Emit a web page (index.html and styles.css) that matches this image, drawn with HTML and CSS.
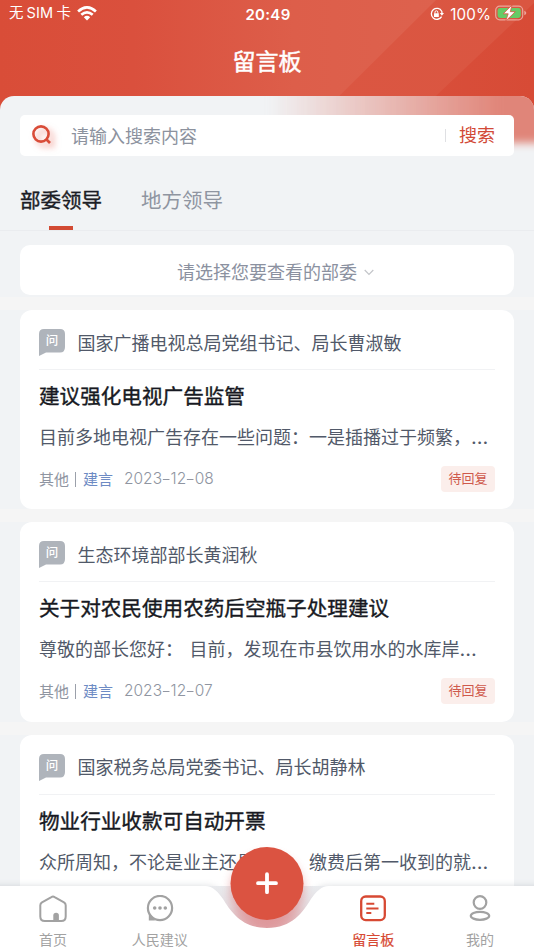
FILE: index.html
```html
<!DOCTYPE html>
<html lang="zh-CN">
<head>
<meta charset="utf-8">
<title>留言板</title>
<link rel="stylesheet" href="styles.css">
</head>
<body>
<div class="phone">
  <header class="top">
    <svg class="top-bg" viewBox="0 0 534 130" preserveAspectRatio="none">
      <defs>
        <linearGradient id="base"><stop offset="0" stop-color="#d94d38"/><stop offset=".25" stop-color="#da503d"/><stop offset=".55" stop-color="#dd5e4a"/><stop offset="1" stop-color="#dd6450"/></linearGradient>
        <linearGradient id="band"><stop offset="0" stop-color="#db5642"/><stop offset="1" stop-color="#da5641"/></linearGradient>
        <linearGradient id="edge"><stop offset="0" stop-color="#d94f3b"/><stop offset="1" stop-color="#d74b36"/></linearGradient>
      </defs>
      <path fill="url(#base)" d="M0 0H534V130H0Z"/>
      <path fill="url(#band)" d="M436 0H534V130H305Z"/>
      <path fill="url(#edge)" d="M534 3V130H400Z"/>
    </svg>
    <div class="status">
      <div class="status-left"><span class="carrier">无<span class="sim">SIM</span>卡</span>
        <svg width="20" height="15" viewBox="0 0 20 15" fill="none" stroke="#fff" stroke-width="2.7"><path d="M1.1 5.4Q10-2.6 18.9 5.4"/><path d="M4.3 8.8Q10 3.8 15.7 8.8"/><path fill="#fff" stroke="none" d="M6.8 11.2Q10 8.4 13.2 11.2L10 14.6Z"/></svg>
      </div>
      <div class="clock">20:49</div>
      <div class="status-right">
        <svg width="14" height="14" viewBox="0 0 14 14" fill="none" stroke="#fff" stroke-width="1.3"><path d="M11.7 4.2A5.5 5.5 0 1 0 11.6 9.6M11.9 4.3V7"/><path fill="#fff" stroke="none" d="M9.8 6H14L11.9 8.8ZM4 6.2H8.8V10H4Z"/><path stroke-width="1" d="M5 6.4V5.2a1.4 1.4 0 0 1 2.8 0v1.2"/></svg>
        <span class="percent">100%</span>
        <svg width="32" height="16" viewBox="0 0 32 16"><rect x=".7" y="1.2" width="27" height="13.6" rx="4" fill="none" stroke="#fff" stroke-opacity=".48" stroke-width="1.2"/><rect x="2.6" y="3.1" width="23.2" height="9.8" rx="2.4" fill="#65cb66"/><path d="M29.3 5.7q2 .7 2 2.3t-2 2.3Z" fill="#fff" opacity=".5"/><path d="M17 0L8.3 8.8H13.2L10.7 16L20.3 6.7H15.3Z" fill="#fff" stroke="#da5642" stroke-width=".8"/></svg>
      </div>
    </div>
    <h1>留言板</h1>
  </header>
  <main class="sheet">
    <div class="glow"></div>
    <div class="search">
      <svg class="magnifier" width="20" height="20" viewBox="0 0 20 20" fill="none" stroke="#d94c38" stroke-width="2.6"><circle cx="9" cy="9" r="7.6"/><path d="M14 14L18 18"/></svg>
      <span class="placeholder">请输入搜索内容</span>
      <span class="search-btn">搜索</span>
    </div>
    <nav class="tabs"><span class="tab active">部委领导</span><span class="tab">地方领导</span></nav>
    <div class="filter"><div class="select"><span>请选择您要查看的部委</span><svg width="10" height="7" viewBox="0 0 10 7" fill="none" stroke="#c3c5c9" stroke-width="1.2"><path d="M.7 1L5 5.3L9.3 1"/></svg></div></div>
    <section class="list">
      <article class="card-row"><div class="card">
        <div class="person"><span class="ask"><svg viewBox="0 0 26 27"><path fill="#afb4bb" d="M5 0H21Q26 0 26 5V18Q26 23.5 21 23.5H7L0 27V5Q0 0 5 0Z"/></svg><b>问</b></span><span>国家广播电视总局党组书记、局长曹淑敏</span></div>
        <h2>建议强化电视广告监管</h2>
        <p class="desc">目前多地电视广告存在一些问题：一是插播过于频繁，<span class="dots">…</span></p>
        <div class="meta"><span>其他</span><i></i><span class="kind">建言</span><span class="date">2023<s>-</s>12<s>-</s>08</span><span class="tag">待回复</span></div>
      </div></article>
      <article class="card-row"><div class="card">
        <div class="person"><span class="ask"><svg viewBox="0 0 26 27"><path fill="#afb4bb" d="M5 0H21Q26 0 26 5V18Q26 23.5 21 23.5H7L0 27V5Q0 0 5 0Z"/></svg><b>问</b></span><span>生态环境部部长黄润秋</span></div>
        <h2>关于对农民使用农药后空瓶子处理建议</h2>
        <p class="desc">尊敬的部长您好： <span class="after-gap">目前，发现在市县饮用水的水库岸</span><span class="dots">…</span></p>
        <div class="meta"><span>其他</span><i></i><span class="kind">建言</span><span class="date">2023<s>-</s>12<s>-</s>07</span><span class="tag">待回复</span></div>
      </div></article>
      <article class="card-row"><div class="card">
        <div class="person"><span class="ask"><svg viewBox="0 0 26 27"><path fill="#afb4bb" d="M5 0H21Q26 0 26 5V18Q26 23.5 21 23.5H7L0 27V5Q0 0 5 0Z"/></svg><b>问</b></span><span>国家税务总局党委书记、局长胡静林</span></div>
        <h2>物业行业收款可自动开票</h2>
        <p class="desc">众所周知，不论是业主还是租户，缴费后第一收到的就<span class="dots">…</span></p>
      </div></article>
    </section>
  </main>
  <footer class="bottom">
    <svg class="bottom-bg" width="534" height="120" viewBox="0 0 534 120">
      <defs>
        <filter id="soft" x="-50%" y="-50%" width="200%" height="200%"><feGaussianBlur stdDeviation="5"/></filter>
        <filter id="lift" x="-5%" y="-30%" width="110%" height="160%"><feGaussianBlur stdDeviation="3.5"/></filter>
        <linearGradient id="pocket" x1="0" y1="0" x2="0" y2="1"><stop offset="0" stop-color="#e9ebee"/><stop offset=".45" stop-color="#e4dfe3"/><stop offset="1" stop-color="#e0aaae"/></linearGradient>
      </defs>
      <path filter="url(#lift)" fill="#707782" opacity=".25" d="M-20 56H205C232 56 228 98 267 98S302 56 329 56H554V140H-20Z"/>
      <path fill="url(#pocket)" d="M200 56H334V100H200Z"/>
      <circle cx="267" cy="61" r="37" fill="#d95a5c" opacity=".4" filter="url(#soft)"/>
      <path fill="#fff" d="M0 56H205C213 56 218 62 223 69C231 82 242 98 267 98S303 82 311 69C316 62 321 56 329 56H534V120H0Z"/>
      <circle cx="267" cy="53.4" r="36.5" fill="#db5341"/>
      <path d="M267 44.2V62.2M258 53.2H276" stroke="#fff" stroke-width="3.8" stroke-linecap="round"/>
    </svg>
    <div class="items">
      <div class="item"><svg viewBox="0 0 28 28" fill="none" stroke="#a2a2a2" stroke-width="2"><path d="M14 1.6Q14.8 1.6 15.6 2.1L25 7.3Q26.7 8.3 26.7 10.3V21.5Q26.7 26 22.2 26H5.8Q1.3 26 1.3 21.5V10.3Q1.3 8.3 3 7.3L12.4 2.1Q13.2 1.6 14 1.6Z"/><path fill="#a2a2a2" stroke="none" d="M14.3 26V20.5a2.8 2.8 0 0 1 5.6 0V26Z"/></svg><span>首页</span></div>
      <div class="item"><svg viewBox="0 0 28 28" fill="none" stroke="#a2a2a2" stroke-width="2.2"><circle cx="14" cy="13" r="12.1"/><path fill="#a2a2a2" stroke="none" d="M2.8 18V25.5H9L5.5 21Z"/><g fill="#a2a2a2" stroke="none"><circle cx="8.7" cy="13" r="1.8"/><circle cx="14" cy="13" r="1.8"/><circle cx="19.3" cy="13" r="1.8"/></g></svg><span>人民建议</span></div>
      <div class="item"></div>
      <div class="item on"><svg viewBox="0 0 28 28" fill="none" stroke="#d74933" stroke-width="2.3"><rect x="2.2" y="1.5" width="23.6" height="23.6" rx="4.5"/><path stroke-width="2" d="M7.3 8.8H15.3M7.3 13.4H19.5M7.3 18H12.3"/></svg><span>留言板</span></div>
      <div class="item"><svg viewBox="0 0 28 28" fill="none" stroke="#a2a2a2" stroke-width="2.2"><circle cx="14" cy="7.5" r="6.3"/><ellipse cx="14" cy="20.8" rx="9.2" ry="4"/></svg><span>我的</span></div>
    </div>
  </footer>
</div>
</body>
</html>
```
FILE: styles.css
```css
* { box-sizing: border-box; }
body { margin: 0; font-family: Inter, "Noto Sans CJK SC", sans-serif; font-weight: 400; }
.phone { position: relative; width: 534px; height: 950px; overflow: hidden; background: #f1f3f5; display: flex; flex-direction: column; }
h1, h2, p { margin: 0; font-weight: 400; white-space: nowrap; }
.top { position: relative; height: 96px; flex: none; color: #fff; }
.top-bg { position: absolute; left: 0; top: 0; width: 534px; height: 130px; }
.status { position: relative; height: 28px; display: grid; grid-template-columns: 1fr auto 1fr; align-items: center; padding: 0 7px 0 9px; }
.status-left, .status-right { display: flex; align-items: center; }
.status-left { gap: 6px; font-size: 14.5px; line-height: 26px; padding-bottom: 2px; }
.sim { margin: 0 3px; letter-spacing: .2px; }
.status-right { justify-content: flex-end; gap: 4px; }
.status-right > svg:first-child { margin-right: 2px; }
.percent { font-size: 15.2px; letter-spacing: .1px; }
.status-right > svg:last-child { position: relative; top: -1px; }
.clock { font-size: 15px; font-weight: 600; letter-spacing: .3px; }
h1 { position: relative; font-size: 23px; line-height: 68px; text-align: center; -webkit-text-stroke: .5px #fff; }
.sheet { position: relative; flex: 1; min-height: 0; background: #f1f3f5; border-radius: 14px 14px 0 0; padding-top: 19px; overflow: hidden; }
.glow { position: absolute; left: 268px; top: -20px; width: 290px; height: 67px; background: linear-gradient(90deg, #e0857900, #e0857970 35%, #e08579 80%, #e08579); filter: blur(4px); }
.search { position: relative; height: 41px; margin: 0 20px; border-radius: 5px; background: #fff; display: flex; align-items: center; padding: 0 19px 0 12px; font-size: 18px; }
.magnifier { filter: drop-shadow(4px 4px 3px #e2524388); margin-top: -1px; }
.placeholder { flex: 1; margin: -2px 0 0 19px; color: #8c929e; }
.search-btn { color: #d24a37; line-height: 22px; padding-left: 14px; background: linear-gradient(#dfe0e3, #dfe0e3) left center / 1px 13px no-repeat; }
.tabs { display: flex; gap: 39px; height: 75px; padding: 14px 20px 0; border-bottom: 1px solid #eaecef; }
.tab { position: relative; height: 60px; line-height: 61px; font-size: 20.5px; color: #8f95a1; }
.tab.active { color: #1b1d25; -webkit-text-stroke: .4px #1b1d25; }
.tab.active::after { content: ""; position: absolute; left: 29px; bottom: 0; width: 24px; height: 4px; background: #d24a33; }
.filter { padding: 14px 20px 2px; }
.select { height: 50px; border-radius: 10px; background: #fff; display: flex; justify-content: center; align-items: center; gap: 7px; padding: 1px 0 0 17px; font-size: 18px; color: #8b91a0; }
.select svg { margin-top: 3px; }
.card-row { border-top: 13px solid #f5f5f5; padding: 0 20px; height: 212.4px; }
.card { height: 199.4px; background: #fff; border-radius: 12px; padding: 0 19px; }
.person { display: flex; align-items: center; gap: 12.5px; height: 60px; padding-top: 6px; border-bottom: 1.5px solid #f1f2f4; color: #515969; font-size: 18px; white-space: nowrap; }
.person > span:last-child { margin-top: -2px; }
.ask { position: relative; width: 26px; height: 27px; flex: none; }
.ask svg { display: block; width: 26px; height: 27px; }
.ask b { position: absolute; left: 0; top: 0; width: 26px; text-align: center; font-size: 12.5px; line-height: 23px; font-weight: 500; color: #fff; }
h2 { height: 53px; line-height: 53px; font-size: 20.6px; color: #171922; -webkit-text-stroke: .4px #171922; }
.desc { height: 28px; line-height: 29px; font-size: 18px; color: #515969; }
.dots { font-size: 20px; letter-spacing: 1px; line-height: 1; }
.after-gap { margin-left: 1.5px; }
.meta { display: flex; align-items: center; height: 56px; font-size: 15px; color: #8f95a1; }
.meta > span:not(.tag) { margin-top: -2px; }
.meta i { width: 1px; height: 15px; margin: 0 7px 0 6px; background: #9ba0aa; }
.kind { color: #6d8bc4; }
.date { margin-left: 11px; font-size: 15.5px; font-weight: 300; }
.date s { display: inline-block; width: 8.5px; text-align: center; text-decoration: none; transform: scaleX(1.4); }
.tag { margin-left: auto; width: 54px; height: 26px; line-height: 25px; text-align: center; border-radius: 4px; background: #fbeeeb; color: #cf594c; font-size: 13px; }
.bottom { position: absolute; left: 0; bottom: 0; width: 534px; height: 64px; }
.bottom-bg { position: absolute; left: 0; bottom: 0; }
.items { position: relative; left: -.5px; display: grid; grid-template-columns: repeat(5, 1fr); height: 64px; }
.item { display: flex; flex-direction: column; align-items: center; padding-top: 9px; font-size: 14px; line-height: 20px; color: #a2a2a2; }
.item svg { width: 28px; height: 28px; margin-bottom: 7px; }
.item.on { color: #d74933; -webkit-text-stroke: .2px #d74933; }
```
